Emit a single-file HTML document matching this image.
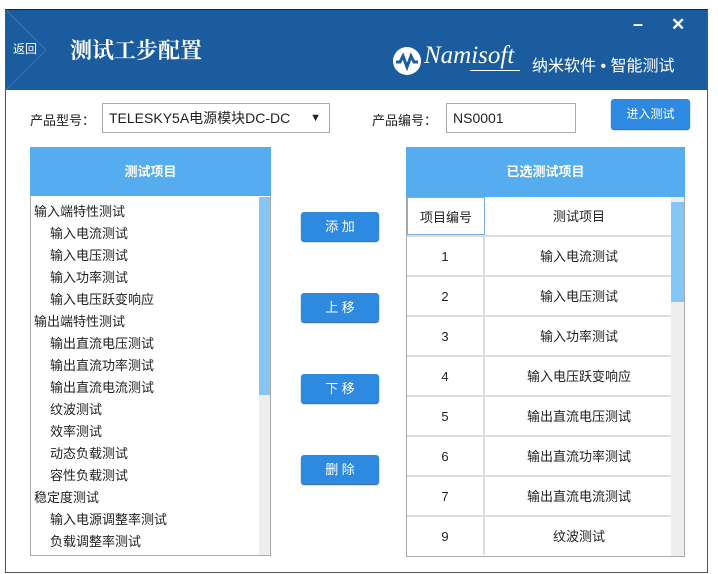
<!DOCTYPE html>
<html><head><meta charset="utf-8"><style>
*{margin:0;padding:0;box-sizing:border-box}
body{width:718px;height:574px;background:#fff;position:relative;overflow:hidden;font-family:"Liberation Sans","Noto Sans CJK SC",sans-serif;color:#222}
.a{position:absolute}
.win{left:5px;top:9px;width:703px;height:564px;border:1px solid #555;border-top:1px solid #222}
.hdr{left:6px;top:10px;width:701px;height:80px;background:#1b5c9e}
.btn{background:#2d8ae0;color:#fff;border-radius:3px;font-size:13px;text-align:center;box-shadow:0 1px 1px #1a5a9a}
.lh{background:#55acef;color:#fff;font-size:13px;text-align:center;font-weight:bold}
.li{font-size:13px;position:absolute;left:34px;white-space:nowrap}
.li.s{left:50px}
.row{position:absolute;left:407px;width:264px;height:40px;border-bottom:2px solid #ddd;font-size:13px}
.row .n{position:absolute;left:0;width:78px;height:38px;line-height:40px;text-align:center;border-right:2px solid #ddd}
.row .t{position:absolute;left:80px;width:184px;height:38px;line-height:40px;text-align:center}
</style></head><body>
<div class="a win"></div>
<div class="a hdr"></div>
<svg class="a" style="left:6px;top:10px" width="50" height="80"><path d="M0 0 L40 40 L0 80" stroke="#3a74b0" stroke-width="1" fill="none"/></svg>
<div class="a" style="left:13px;top:40px;color:#fff;font-size:12px">返回</div>
<div class="a" style="left:70px;top:34px;color:#fff;font-size:22px;font-family:'Noto Serif CJK SC',serif;font-weight:bold">测试工步配置</div>
<div class="a" style="left:633px;top:14px;color:#fff;font-size:18px;font-weight:bold">–</div>
<div class="a" style="left:671px;top:15px;color:#fff;font-size:17px;font-weight:bold">✕</div>
<svg class="a" style="left:392px;top:46px" width="30" height="30"><circle cx="15" cy="15" r="14" fill="#fff"/><path d="M4 16 L8 16 L11 10 L15 21 L19 10 L22 16 L26 16" stroke="#1b5c9e" stroke-width="3" fill="none"/></svg>
<div class="a" style="left:424px;top:42px;color:#fff;font-size:25px;font-style:italic;font-family:'Liberation Serif',serif">Namisoft</div>
<div class="a" style="left:470px;top:70px;width:50px;height:1px;background:#fff"></div>
<div class="a" style="left:532px;top:52px;color:#fff;font-size:16px">纳米软件 • 智能测试</div>
<div class="a" style="left:30px;top:110px;font-size:13px">产品型号：</div>
<div class="a" style="left:102px;top:103px;width:228px;height:30px;border:1px solid #aaa;font-size:14px;line-height:28px;padding-left:6px">TELESKY5A电源模块DC-DC<span style="position:absolute;right:8px;font-size:11px">▼</span></div>
<div class="a" style="left:372px;top:110px;font-size:13px">产品编号：</div>
<div class="a" style="left:446px;top:103px;width:130px;height:30px;border:1px solid #aaa;font-size:14px;line-height:28px;padding-left:6px">NS0001</div>
<div class="a btn" style="left:611px;top:99px;width:79px;height:30px;line-height:30px;font-size:12px">进入测试</div>
<div class="a lh" style="left:30px;top:147px;width:241px;height:49px;line-height:49px">测试项目</div>
<div class="a" style="left:30px;top:196px;width:241px;height:360px;border:1px solid #aaa;border-top:none"></div>
<div class="a" style="left:259px;top:197px;width:11px;height:358px;background:#eee"></div>
<div class="a" style="left:259px;top:197px;width:11px;height:198px;background:#86c6f4"></div>
<div class="li" style="top:201px">输入端特性测试</div>
<div class="li s" style="top:223px">输入电流测试</div>
<div class="li s" style="top:245px">输入电压测试</div>
<div class="li s" style="top:267px">输入功率测试</div>
<div class="li s" style="top:289px">输入电压跃变响应</div>
<div class="li" style="top:311px">输出端特性测试</div>
<div class="li s" style="top:333px">输出直流电压测试</div>
<div class="li s" style="top:355px">输出直流功率测试</div>
<div class="li s" style="top:377px">输出直流电流测试</div>
<div class="li s" style="top:399px">纹波测试</div>
<div class="li s" style="top:421px">效率测试</div>
<div class="li s" style="top:443px">动态负载测试</div>
<div class="li s" style="top:465px">容性负载测试</div>
<div class="li" style="top:487px">稳定度测试</div>
<div class="li s" style="top:509px">输入电源调整率测试</div>
<div class="li s" style="top:531px">负载调整率测试</div>
<div class="a btn" style="left:301px;top:212px;width:78px;height:29px;line-height:29px">添 加</div>
<div class="a btn" style="left:301px;top:293px;width:78px;height:29px;line-height:29px">上 移</div>
<div class="a btn" style="left:301px;top:374px;width:78px;height:29px;line-height:29px">下 移</div>
<div class="a btn" style="left:301px;top:455px;width:78px;height:29px;line-height:29px">删 除</div>
<div class="a lh" style="left:406px;top:147px;width:279px;height:50px;line-height:50px">已选测试项目</div>
<div class="a" style="left:406px;top:197px;width:279px;height:360px;border:1px solid #aaa;border-top:none"></div>
<div class="a" style="left:671px;top:197px;width:13px;height:359px;background:#eee"></div>
<div class="a" style="left:671px;top:202px;width:13px;height:100px;background:#86c6f4"></div>
<div class="row" style="top:197px"><div class="n" style="border:1px solid #7ab0e0">项目编号</div><div class="t">测试项目</div></div>
<div class="row" style="top:237px"><div class="n">1</div><div class="t">输入电流测试</div></div>
<div class="row" style="top:277px"><div class="n">2</div><div class="t">输入电压测试</div></div>
<div class="row" style="top:317px"><div class="n">3</div><div class="t">输入功率测试</div></div>
<div class="row" style="top:357px"><div class="n">4</div><div class="t">输入电压跃变响应</div></div>
<div class="row" style="top:397px"><div class="n">5</div><div class="t">输出直流电压测试</div></div>
<div class="row" style="top:437px"><div class="n">6</div><div class="t">输出直流功率测试</div></div>
<div class="row" style="top:477px"><div class="n">7</div><div class="t">输出直流电流测试</div></div>
<div class="row" style="top:517px;border-bottom:none"><div class="n">9</div><div class="t">纹波测试</div></div>
</body></html>
